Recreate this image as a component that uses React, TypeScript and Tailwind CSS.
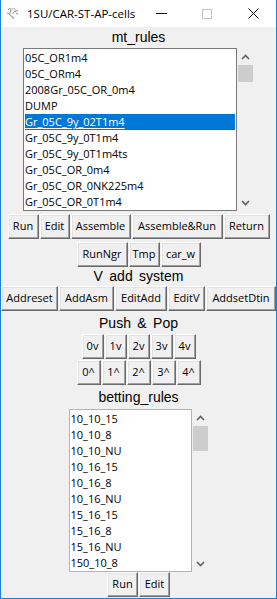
import React from "react";

const UI = "font-['Open_Sans',sans-serif]";
const LBL = "font-['Liberation_Sans',Arial,sans-serif] text-[14px] [word-spacing:2.5px] text-black";

const BTN =
  "h-[25px] flex items-center justify-center bg-[#f0f0f0] border border-t-[#ffffff] border-l-[#ffffff] border-r-[#696969] border-b-[#696969] shadow-[inset_-1px_-1px_0_#a0a0a0,inset_1px_1px_0_#e3e3e3] text-[11px] text-black whitespace-nowrap " +
  UI;

function Btn({ w, children }: { w: string; children: React.ReactNode }) {
  return <div className={BTN + " " + w}>{children}</div>;
}

function Chevron({ up }: { up?: boolean }) {
  return (
    <svg width="9" height="6" viewBox="0 0 9 6">
      {up ? (
        <path d="M1 5 L4.5 1.5 L8 5" fill="none" stroke="#606060" strokeWidth="1.6" />
      ) : (
        <path d="M1 1 L4.5 4.5 L8 1" fill="none" stroke="#606060" strokeWidth="1.6" />
      )}
    </svg>
  );
}

function ListBox({
  items,
  selected,
  boxW,
  border,
  thumbH,
}: {
  items: string[];
  selected?: number;
  boxW: string;
  border: string;
  thumbH: string;
}) {
  return (
    <div className="flex h-[163px]">
      <div className={"h-[163px] bg-white border pt-[1px] px-[1px] overflow-hidden " + boxW + " " + border}>
        {items.map((t, i) => (
          <div
            key={t}
            className={
              "h-[16px] leading-[16px] text-[11px] whitespace-nowrap " +
              UI +
              (i === selected ? " bg-[#0078d7] text-white" : " text-black")
            }
          >
            <span className={i === selected ? "underline underline-offset-[2px]" : ""}>{t}</span>
          </div>
        ))}
      </div>
      <div className="w-[17px] h-[163px] flex flex-col bg-[#f0f0f0]">
        <div className="h-[17px] flex items-center justify-center">
          <Chevron up />
        </div>
        <div className={"mx-[1px] bg-[#cdcdcd] " + thumbH} />
        <div className="flex-1" />
        <div className="h-[17px] flex items-center justify-center">
          <Chevron />
        </div>
      </div>
    </div>
  );
}

function TkIcon() {
  return (
    <svg width="13" height="13" viewBox="0 0 13 13">
      <path d="M2 3 C3 1 5 1 5 3 C5 5 3 6 4 8 C5 10 8 9 7 12" fill="none" stroke="#7a7a7a" strokeWidth="1" />
      <path d="M6 2 C8 1 10 2 9 4 C8 6 6 5 7 7" fill="none" stroke="#9a9a9a" strokeWidth="1" />
      <path d="M9 5 L12 3 M10 7 L12 6" fill="none" stroke="#8a8a8a" strokeWidth="1" />
      <path d="M1 6 L3 7" fill="none" stroke="#8a8a8a" strokeWidth="1" />
    </svg>
  );
}

export default function App() {
  const list1 = [
    "05C_OR1m4",
    "05C_ORm4",
    "2008Gr_05C_OR_0m4",
    "DUMP",
    "Gr_05C_9y_02T1m4",
    "Gr_05C_9y_0T1m4",
    "Gr_05C_9y_0T1m4ts",
    "Gr_05C_OR_0m4",
    "Gr_05C_OR_0NK225m4",
    "Gr_05C_OR_0T1m4",
  ];
  const list2 = [
    "10_10_15",
    "10_10_8",
    "10_10_NU",
    "10_16_15",
    "10_16_8",
    "10_16_NU",
    "15_16_15",
    "15_16_8",
    "15_16_NU",
    "150_10_8",
  ];
  return (
    <div className="w-[277px] h-[599px] bg-[#f0f0f0] border-x border-b border-[#1e7fd9] flex flex-col overflow-hidden">
      {/* title bar */}
      <div className="h-[27px] bg-white flex items-center shrink-0">
        <div className="pl-[5px] w-[26px] flex items-center">
          <TkIcon />
        </div>
        <div className={"text-[11.5px] text-black whitespace-nowrap " + UI}>1SU/CAR-ST-AP-cells</div>
        <div className="ml-auto flex h-[27px]">
          <div className="w-[46px] flex items-center justify-center">
            <div className="w-[11px] h-[1px] bg-black" />
          </div>
          <div className="w-[46px] flex items-center justify-center">
            <div className="w-[10px] h-[10px] border border-[#c4c4c4]" />
          </div>
          <div className="w-[46px] flex items-center justify-center">
            <svg width="11" height="11" viewBox="0 0 11 11">
              <path d="M0.5 0.5 L10.5 10.5 M10.5 0.5 L0.5 10.5" stroke="#000" strokeWidth="1" />
            </svg>
          </div>
        </div>
      </div>

      {/* content */}
      <div className="flex flex-col items-center">
        <div className={"h-[21px] flex items-center " + LBL}>mt_rules</div>
        <ListBox items={list1} selected={4} boxW="w-[214px]" border="border-[#7a7a7a]" thumbH="h-[17px]" />

        <div className="mt-[3px] flex gap-[1px]">
          <Btn w="w-[31px]">Run</Btn>
          <Btn w="w-[30px]">Edit</Btn>
          <Btn w="w-[60px]">Assemble</Btn>
          <Btn w="w-[91px]">Assemble&amp;Run</Btn>
          <Btn w="w-[46px]">Return</Btn>
        </div>
        <div className="mt-[3px] flex gap-[1px]">
          <Btn w="w-[51px]">RunNgr</Btn>
          <Btn w="w-[31px]">Tmp</Btn>
          <Btn w="w-[40px]">car_w</Btn>
        </div>

        <div className={"h-[19px] flex items-center " + LBL}>V add system</div>
        <div className="flex gap-[1px]">
          <Btn w="w-[57px]">Addreset</Btn>
          <Btn w="w-[55px]">AddAsm</Btn>
          <Btn w="w-[52px]">EditAdd</Btn>
          <Btn w="w-[37px]">EditV</Btn>
          <Btn w="w-[70px]">AddsetDtin</Btn>
        </div>

        <div className={"h-[23px] flex items-center pt-[2px] " + LBL}>Push &amp; Pop</div>
        <div className="flex gap-[1px]">
          <Btn w="w-[22px]">0v</Btn>
          <Btn w="w-[22px]">1v</Btn>
          <Btn w="w-[22px]">2v</Btn>
          <Btn w="w-[22px]">3v</Btn>
          <Btn w="w-[22px]">4v</Btn>
        </div>
        <div className="mt-[1px] flex gap-[1px]">
          <Btn w="w-[24px]">0^</Btn>
          <Btn w="w-[24px]">1^</Btn>
          <Btn w="w-[24px]">2^</Btn>
          <Btn w="w-[24px]">3^</Btn>
          <Btn w="w-[24px]">4^</Btn>
        </div>

        <div className={"h-[24px] flex items-center " + LBL}>betting_rules</div>
        <ListBox items={list2} boxW="w-[123px]" border="border-[#b4b4b4]" thumbH="h-[25px]" />

        <div className="flex gap-[1px]">
          <Btn w="w-[31px]">Run</Btn>
          <Btn w="w-[31px]">Edit</Btn>
        </div>
      </div>
    </div>
  );
}
